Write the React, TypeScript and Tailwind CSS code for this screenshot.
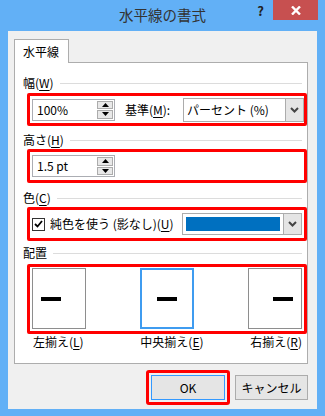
import React from "react";

const U = ({ children }: { children: React.ReactNode }) => (
    <span className="underline underline-offset-[2px] decoration-[1px]">{children}</span>
);

// section heading with the light rule after it
const SectionLabel = ({ children }: { children: React.ReactNode }) => (
    <div className="flex items-center h-4 pl-2 pr-[5px]">
        <span className="whitespace-nowrap leading-none">{children}</span>
        <div className="ml-[6px] h-px flex-1 bg-[#dcdcdc]" />
    </div>
);

const Arrow = ({ up }: { up?: boolean }) => (
    <svg width="7" height="4" viewBox="0 0 7 4">
        <path d={up ? "M0 4 L3.5 0 L7 4 Z" : "M0 0 L3.5 4 L7 0 Z"} fill="#000" />
    </svg>
);

const NumberBox = ({ value }: { value: string }) => (
    <div className="flex w-[83px] h-[22px] border border-[#abadb3] bg-white">
        <div className="flex-1 flex items-center pl-[4px] leading-none">{value}</div>
        <div className="flex flex-col w-[17px] py-px pr-px gap-px">
            <div className="flex-1 flex items-center justify-center bg-[#e8e8e8] border border-[#acacac]">
                <Arrow up />
            </div>
            <div className="flex-1 flex items-center justify-center bg-[#e8e8e8] border border-[#acacac]">
                <Arrow />
            </div>
        </div>
    </div>
);

const Chevron = () => (
    <svg width="9" height="6" viewBox="0 0 9 6">
        <path d="M1 1 L4.5 4.5 L8 1" stroke="#444" strokeWidth="2" fill="none" />
    </svg>
);

const DropButton = () => (
    <div className="w-[18px] flex items-center justify-center bg-[#e5e5e5] border-l border-[#acacac]">
        <Chevron />
    </div>
);

const AlignBox = ({ pos, active }: { pos: "left" | "center" | "right"; active?: boolean }) => (
    <div
        className={`w-[54px] h-[61px] flex items-center bg-white ${active ? "border-2 border-[#3f9cf0] p-px" : "border border-[#8e8e8e]"
            } ${pos === "left" ? "justify-start pl-[8px]" : pos === "right" ? "justify-end pr-[8px]" : "justify-center"}`}
    >
        <div className="w-5 h-1 bg-black" />
    </div>
);

const App = () => {
    return (
        <div
            className="w-[325px] h-[416px] bg-[#62b0f6] text-[12px] text-black"
            style={{ fontFamily: '"Noto Sans CJK JP", "Noto Sans", sans-serif' }}
        >
            {/* title bar */}
            <div className="grid grid-cols-[1fr_auto_1fr] h-[31px]">
                <div />
                <div className="flex items-center text-[14.5px] text-[#333] leading-none pb-px">水平線の書式</div>
                <div className="flex justify-end items-start pr-[7px]">
                    <span className="mt-[4px] mr-[9px] font-bold text-[13px] leading-none text-[#222]">?</span>
                    <div className="w-[45px] h-[20px] bg-[#c75050] flex items-center justify-center">
                        <svg width="10" height="9" viewBox="0 0 10 9">
                            <path d="M1 0.5 L9 8.5 M9 0.5 L1 8.5" stroke="#fff" strokeWidth="2.4" />
                        </svg>
                    </div>
                </div>
            </div>

            {/* client area */}
            <div className="mx-[8px] h-[378px] bg-[#f0f0f0] pt-[8px] pl-[6px] pr-[9px]">
                {/* tab */}
                <div className="relative z-10 -mb-px w-[55px] h-[24px] bg-white border border-b-0 border-[#adadad] flex items-center pl-[8px]">
                    水平線
                </div>

                {/* tab panel */}
                <div className="h-[302px] bg-white border border-[#adadad] pt-[12px]">
                    <SectionLabel>
                        幅(<U>W</U>)
                    </SectionLabel>
                    <div className="mt-[2px] ml-[12px] h-[33px] border-[3px] border-[#ff0000] rounded-[2px] flex items-center pl-[2px]">
                        <NumberBox value="100%" />
                        <span className="ml-[10px] whitespace-nowrap">
                            基準(<U>M</U>):
                        </span>
                        <div className="ml-auto flex w-[121px] h-[24px] border border-[#acacac] bg-white">
                            <div className="flex-1 flex items-center pl-[3px] leading-none">パーセント (%)</div>
                            <DropButton />
                        </div>
                    </div>

                    <div className="mt-[6px]">
                        <SectionLabel>
                            高さ(<U>H</U>)
                        </SectionLabel>
                    </div>
                    <div className="mt-[1px] ml-[12px] h-[34px] border-[3px] border-[#ff0000] rounded-[2px] flex items-center pl-[2px]">
                        <NumberBox value="1.5 pt" />
                    </div>

                    <div className="mt-[7px]">
                        <SectionLabel>
                            色(<U>C</U>)
                        </SectionLabel>
                    </div>
                    <div className="mt-[1px] ml-[12px] h-[34px] border-[3px] border-[#ff0000] rounded-[2px] flex items-center pl-[2px] pr-[2px]">
                        <div className="w-[13px] h-[13px] border border-[#333] bg-white flex items-center justify-center">
                            <svg width="9" height="8" viewBox="0 0 9 8">
                                <path d="M1 4 L3.5 6.5 L8 1" stroke="#000" strokeWidth="1.8" fill="none" />
                            </svg>
                        </div>
                        <span className="ml-[5px] whitespace-nowrap">
                            純色を使う (影なし)(<U>U</U>)
                        </span>
                        <div className="ml-auto flex w-[120px] h-[22px] border border-[#acacac] bg-white">
                            <div className="flex-1 p-[3px]">
                                <div className="w-full h-full bg-[#0070c0]" />
                            </div>
                            <DropButton />
                        </div>
                    </div>

                    <div className="mt-[4px]">
                        <SectionLabel>配置</SectionLabel>
                    </div>
                    <div className="mt-[3px] ml-[12px] h-[70px] border-[3px] border-[#ff0000] rounded-[2px] flex items-start justify-between pt-px px-[2px]">
                        <AlignBox pos="left" />
                        <AlignBox pos="center" active />
                        <AlignBox pos="right" />
                    </div>
                    <div className="ml-[15px] mr-[5px] h-4 flex items-center justify-between pl-[3px] leading-none">
                        <span>
                            左揃え(<U>L</U>)
                        </span>
                        <span className="ml-[10px]">
                            中央揃え(<U>E</U>)
                        </span>
                        <span>
                            右揃え(<U>R</U>)
                        </span>
                    </div>
                </div>

                {/* buttons */}
                <div className="mt-[6px] flex justify-end items-center">
                    <div className="border-[3px] border-[#ff0000] rounded-[3px] p-[2px]">
                        <button className="w-[74px] h-[25px] border border-[#3399ff] bg-[#e5e5e5] flex items-center justify-center leading-none">
                            OK
                        </button>
                    </div>
                    <button className="ml-[5px] w-[73px] h-[25px] border border-[#acacac] bg-[#e5e5e5] flex items-center justify-center leading-none">
                        キャンセル
                    </button>
                </div>
            </div>
        </div>
    );
};

export default App;
